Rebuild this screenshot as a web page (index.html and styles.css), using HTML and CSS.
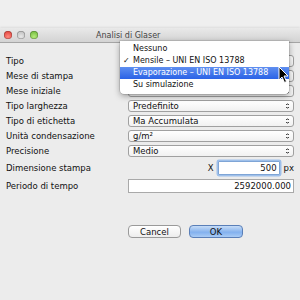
FILE: index.html
```html
<!DOCTYPE html>
<html lang="it">
<head>
  <meta charset="UTF-8" />
  <title>Analisi di Glaser</title>
  <link rel="stylesheet" href="styles.css">
</head>
<body>

  <div class="desktop"></div>

  <div class="window">
    <div class="titlebar">
      <span class="light red"></span>
      <span class="light grey"></span>
      <span class="light green"></span>
      <span class="title">Analisi di Glaser</span>
    </div>

    <div class="form">
      <label>Tipo</label>
      <div class="popup"></div>

      <label>Mese di stampa</label>
      <div class="popup"></div>

      <label>Mese iniziale</label>
      <div class="popup">Automatico</div>

      <label>Tipo larghezza</label>
      <div class="popup">Predefinito</div>

      <label>Tipo di etichetta</label>
      <div class="popup">Ma Accumulata</div>

      <label>Unità condensazione</label>
      <div class="popup">g/m²</div>

      <label>Precisione</label>
      <div class="popup">Medio</div>

      <label class="tall">Dimensione stampa</label>
      <div class="size-row">
        <span>X</span>
        <input class="field focus" type="text" value="500" />
        <span>px</span>
      </div>

      <label class="tall">Periodo di tempo</label>
      <input class="field" type="text" value="2592000.000" />
    </div>

    <div class="buttons">
      <button class="btn">Cancel</button>
      <button class="btn btn-ok">OK</button>
    </div>

    <!-- menu aperto del popup "Tipo" -->
    <ul class="menu">
      <li>Nessuno</li>
      <li class="checked">Mensile – UNI EN ISO 13788</li>
      <li class="selected">Evaporazione – UNI EN ISO 13788</li>
      <li>Su simulazione</li>
    </ul>

    <svg class="cursor" width="12" height="18" viewBox="0 0 12 18">
      <path d="M1 1 L1 14 L4 11 L6.5 16.5 L8.5 15.5 L6 10 L10 10 Z" fill="#000" stroke="#fff" stroke-width="1"/>
    </svg>
  </div>

</body>
</html>
```

FILE: styles.css
```css
body {
  margin: 0;
  background-color: #ececec;
  font-family: "DejaVu Sans", Verdana, sans-serif;
  font-size: 8.5px;
  color: #111;
  overflow: hidden;
}

.desktop {
  height: 28px;
  background-color: #efefef;
}

.window {
  position: relative;
  background-color: #ececec;
  height: 272px;
}

/* Barra del titolo */
.titlebar {
  height: 14px;
  display: flex;
  align-items: center;
  gap: 5px;
  padding-left: 4px;
  background: linear-gradient(#e9e9e9, #d3d3d3);
  border-bottom: 1px solid #a5a5a5;
  box-shadow: 0 -1px 2px rgba(0, 0, 0, 0.08);
}

.light {
  width: 8px;
  height: 8px;
  border-radius: 50%;
  box-shadow: inset 0 0 0 0.5px rgba(0, 0, 0, 0.35);
}
.red { background: radial-gradient(circle at 50% 70%, #ff8a80, #d9312b); }
.grey { background: radial-gradient(circle at 50% 70%, #e8e8e8, #b3b3b3); }
.green { background: radial-gradient(circle at 50% 70%, #b6ea7c, #5fae2a); }

.title {
  margin-left: 53px;
  color: #444;
  font-size: 8px;
}

/* Form */
.form {
  display: grid;
  grid-template-columns: 122px 166px;
  row-gap: 3px;
  padding: 12px 0 0 6px;
  align-items: center;
}

.form label {
  line-height: 12px;
}
.form label.tall {
  line-height: 14px;
  margin-top: 1px;
}

.popup {
  height: 10px;
  line-height: 10px;
  padding: 0 14px 0 4px;
  border: 1px solid #a0a0a0;
  border-radius: 3px;
  background: linear-gradient(#ffffff, #f1f1f1);
  position: relative;
  white-space: nowrap;
  overflow: hidden;
}
.popup::after {
  content: "";
  position: absolute;
  right: 4px;
  top: 2px;
  width: 3px;
  height: 6px;
  background:
    linear-gradient(to bottom right, transparent 50%, #444 50%) 0 0 / 1.5px 2px no-repeat,
    linear-gradient(to bottom left, transparent 50%, #444 50%) 1.5px 0 / 1.5px 2px no-repeat,
    linear-gradient(to top right, transparent 50%, #444 50%) 0 4px / 1.5px 2px no-repeat,
    linear-gradient(to top left, transparent 50%, #444 50%) 1.5px 4px / 1.5px 2px no-repeat;
}

.size-row {
  display: flex;
  align-items: center;
  justify-content: flex-end;
  gap: 4px;
  margin-top: 1px;
}

.field {
  box-sizing: border-box;
  height: 14px;
  border: 1px solid #a9a9a9;
  background: #fff;
  font-family: inherit;
  font-size: 8.5px;
  text-align: right;
  padding: 0 2px;
  margin: 0;
  color: #111;
}
.field.focus {
  width: 62px;
  border-color: #7fa5d6;
  box-shadow: 0 0 0 1.5px #9fc0ea;
  border-radius: 1px;
}

/* Pulsanti */
.buttons {
  display: flex;
  gap: 8px;
  padding: 32px 0 0 128px;
}

.btn {
  width: 53px;
  height: 13px;
  padding: 0;
  border: 1px solid #9a9a9a;
  border-radius: 4px;
  background: linear-gradient(#ffffff, #ededed);
  font-family: inherit;
  font-size: 8.5px;
  color: #111;
}
.btn-ok {
  width: 54px;
  border-color: #5a7fb8;
  background: linear-gradient(#c6dcf7, #8cb6ee 50%, #7eaeee 51%, #a9cbf5);
}

/* Menu aperto */
.menu {
  position: absolute;
  left: 120px;
  top: 13px;
  width: 169px;
  margin: 0;
  padding: 2px 0 3px;
  list-style: none;
  font-size: 8px;
  background: #fff;
  border-radius: 0 0 4px 4px;
  box-shadow: 0 2px 6px rgba(0, 0, 0, 0.35), 0 0 0 0.5px rgba(0, 0, 0, 0.2);
}
.menu li {
  height: 12px;
  line-height: 12px;
  padding-left: 13px;
  position: relative;
  white-space: nowrap;
}
.menu li.checked::before {
  content: "✓";
  position: absolute;
  left: 3px;
}
.menu li.selected {
  background: linear-gradient(#5f8ff0, #2a62e6);
  color: #fff;
}

.cursor {
  position: absolute;
  left: 278px;
  top: 38px;
}
```
